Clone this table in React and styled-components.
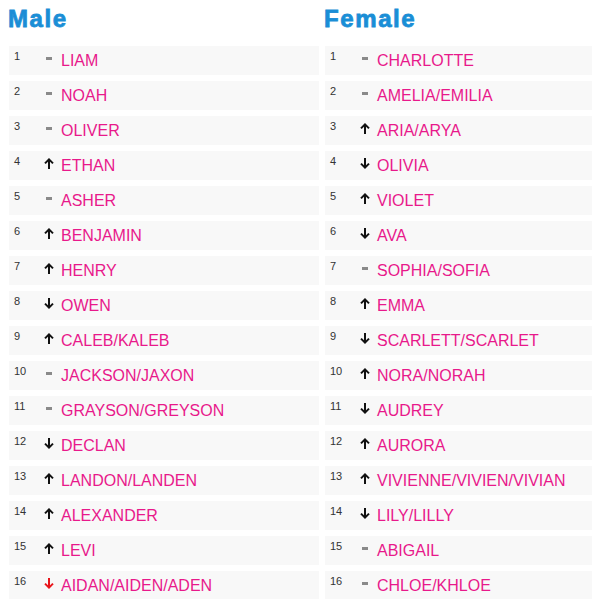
import styled, { createGlobalStyle } from 'styled-components'

const male = [
  ['LIAM', 'same'], ['NOAH', 'same'], ['OLIVER', 'same'], ['ETHAN', 'up'],
  ['ASHER', 'same'], ['BENJAMIN', 'up'], ['HENRY', 'up'], ['OWEN', 'down'],
  ['CALEB/KALEB', 'up'], ['JACKSON/JAXON', 'same'], ['GRAYSON/GREYSON', 'same'], ['DECLAN', 'down'],
  ['LANDON/LANDEN', 'up'], ['ALEXANDER', 'up'], ['LEVI', 'up'], ['AIDAN/AIDEN/ADEN', 'down', true],
]

const female = [
  ['CHARLOTTE', 'same'], ['AMELIA/EMILIA', 'same'], ['ARIA/ARYA', 'up'], ['OLIVIA', 'down'],
  ['VIOLET', 'up'], ['AVA', 'down'], ['SOPHIA/SOFIA', 'same'], ['EMMA', 'up'],
  ['SCARLETT/SCARLET', 'down'], ['NORA/NORAH', 'up'], ['AUDREY', 'down'], ['AURORA', 'up'],
  ['VIVIENNE/VIVIEN/VIVIAN', 'up'], ['LILY/LILLY', 'down'], ['ABIGAIL', 'same'], ['CHLOE/KHLOE', 'same'],
]

const GlobalStyle = createGlobalStyle`
  html, body {
    margin: 0;
    background: #fff;
    overflow: hidden;
  }
  body {
    font-family: "Liberation Sans", Arial, sans-serif;
  }
`

// rank change arrow, pointing up or down
const Arrow = ({ dir, alert }) => (
  <svg width="10" height="11" viewBox="0 0 10 11">
    <g
      fill="none"
      stroke={alert ? '#e8141a' : '#111'}
      strokeWidth="2"
      transform={dir === 'down' ? 'rotate(180 5 5.5)' : undefined}
    >
      <path d="M5 1.5 V11" />
      <path d="M1 5.4 L5 1.4 L9 5.4" />
    </g>
  </svg>
)

const Trend = ({ dir, alert }) => (
  <Marker>{dir === 'same' ? <Dash /> : <Arrow dir={dir} alert={alert} />}</Marker>
)

const List = ({ title, names }) => (
  <Column>
    <Heading>{title}</Heading>
    {names.map(([name, dir, alert], i) => (
      <Row key={name}>
        <Rank>{i + 1}</Rank>
        <Trend dir={dir} alert={alert} />
        <Name>{name}</Name>
      </Row>
    ))}
  </Column>
)

const App = () => {
  return (
    <>
      <GlobalStyle />
      <Page>
        <List title="Male" names={male} />
        <List title="Female" names={female} />
      </Page>
    </>
  )
}

const Page = styled.div`
  display: flex;
  gap: 6px;
  padding: 0 0 0 9px;
  width: 700px;
`

const Column = styled.div`
  width: 310px;
  flex: none;
`

const Heading = styled.h2`
  margin: 4px 0 12px -1px;
  height: 30px;
  line-height: 30px;
  font-size: 24px;
  font-weight: 700;
  letter-spacing: 1.6px;
  color: #1a8ed6;
  -webkit-text-stroke: 0.8px #1a8ed6;
`

const Row = styled.div`
  display: flex;
  align-items: center;
  height: 29px;
  margin-bottom: 6px;
  padding-left: 5px;
  background: #f8f8f8;
`

const Rank = styled.span`
  align-self: flex-start;
  width: 26px;
  margin-top: 4px;
  font-size: 11px;
  color: #333;
`

const Marker = styled.span`
  display: flex;
  align-items: center;
  justify-content: center;
  width: 18px;
  height: 14px;
  margin: -5px 3px 0 0;
`

const Dash = styled.span`
  width: 6px;
  height: 3px;
  background: #8a8a8a;
`

const Name = styled.span`
  font-size: 16px;
  color: #e8198b;
`

export default App
